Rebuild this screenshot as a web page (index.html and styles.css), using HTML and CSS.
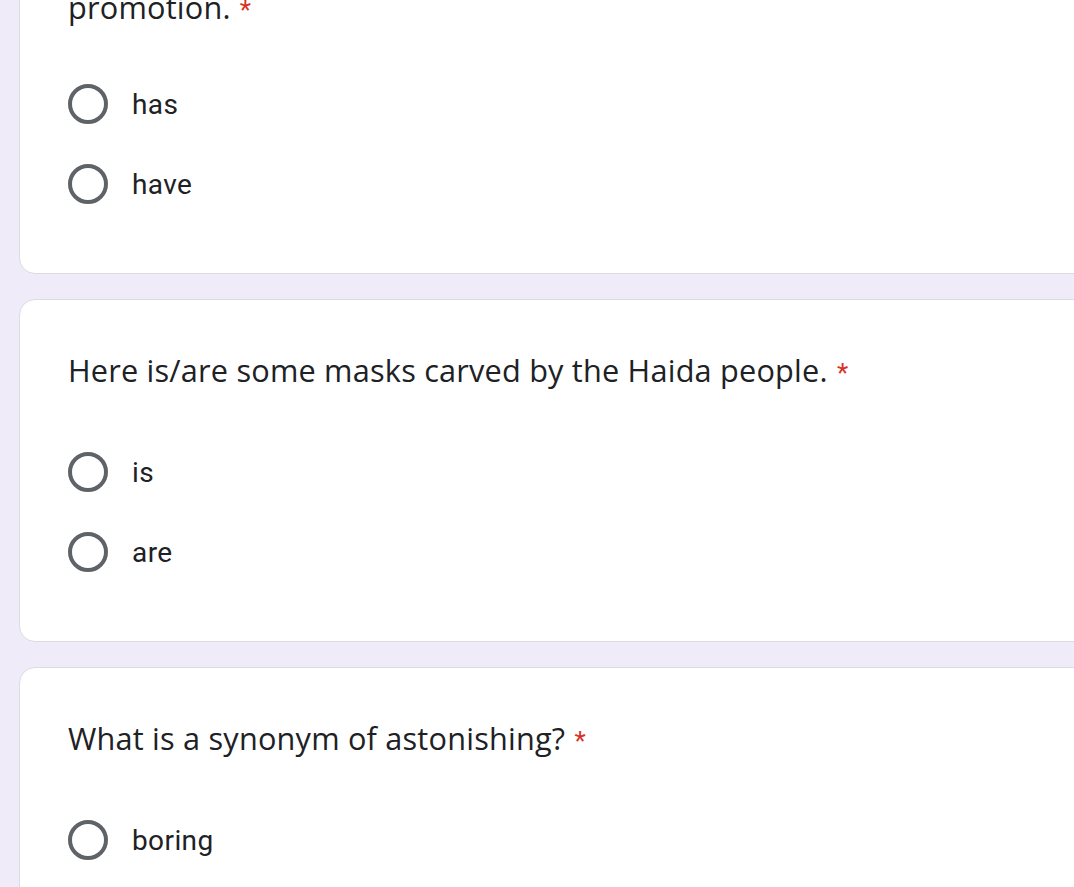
FILE: index.html
```html
<!DOCTYPE html>
<html lang="en">
<head>
<meta charset="utf-8">
<title>Form</title>
<link rel="stylesheet" href="styles.css">
</head>
<body>
<main class="form">
  <section class="card">
    <div class="question question-tail">promotion. <span class="req">*</span></div>
    <div class="options options-tail">
      <label class="option"><span class="radio"></span><span class="opt-text">has</span></label>
      <label class="option"><span class="radio"></span><span class="opt-text">have</span></label>
    </div>
  </section>
  <section class="card">
    <div class="question">Here is/are some masks carved by the Haida people. <span class="req">*</span></div>
    <div class="options">
      <label class="option"><span class="radio"></span><span class="opt-text">is</span></label>
      <label class="option"><span class="radio"></span><span class="opt-text">are</span></label>
    </div>
  </section>
  <section class="card">
    <div class="question">What is a synonym of astonishing? <span class="req">*</span></div>
    <div class="options">
      <label class="option"><span class="radio"></span><span class="opt-text">boring</span></label>
      <label class="option"><span class="radio"></span><span class="opt-text">amazing</span></label>
    </div>
  </section>
</main>
</body>
</html>
```
FILE: styles.css
```css
html, body {
  margin: 0;
  padding: 0;
}
body {
  background: #f0ebf8;
  overflow: hidden;
  height: 887px;
}
.form {
  margin-top: -69px;
  padding-left: 19px;
  display: flex;
  flex-direction: column;
  gap: 25px;
}
.card {
  width: 1300px;
  background: #fff;
  border: 1px solid #dadce0;
  border-radius: 16px;
  padding: 48px 48px 49px;
  box-sizing: border-box;
}
.question {
  font-family: "Open Sans", sans-serif;
  font-size: 30.7px;
  line-height: 44px;
  height: 48px;
  padding-bottom: 4px;
  color: #202124;
  letter-spacing: 0.2px;
  box-sizing: border-box;
}
.question-tail {
  height: 53px;
  padding-top: 5px;
}
.req {
  color: #d93025;
  font-family: Roboto, sans-serif;
  font-size: 26px;
  line-height: 1;
  margin-left: 1px;
}
.options {
  margin-top: 36px;
  display: flex;
  flex-direction: column;
}
.options-tail {
  margin-top: 31px;
}
.option {
  display: flex;
  align-items: center;
  height: 80px;
}
.radio {
  width: 40px;
  height: 40px;
  box-sizing: border-box;
  border: 4px solid #5f6368;
  border-radius: 50%;
  flex: none;
}
.opt-text {
  margin-left: 24px;
  font-family: Roboto, sans-serif;
  font-size: 28px;
  color: #202124;
  letter-spacing: 0.4px;
}
```
